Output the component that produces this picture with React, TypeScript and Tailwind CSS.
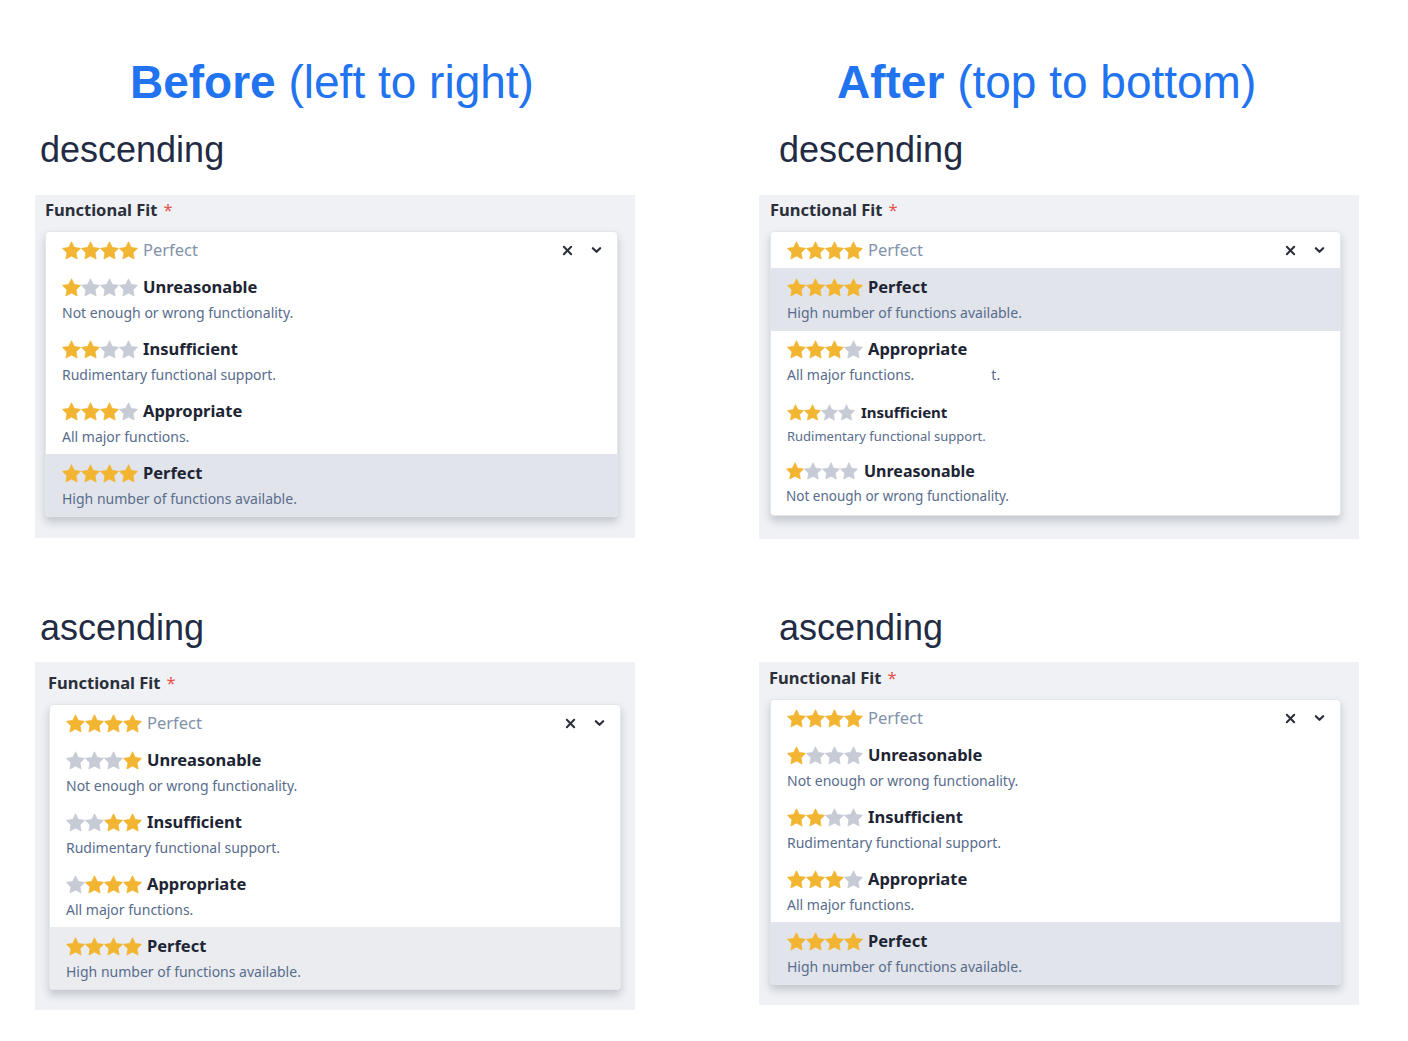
import React from 'react'

const GOLD = '#f2b532'
const GREY = '#c6cbd5'

type Opt = {
  stars: number
  title: string
  desc: string
  active?: boolean
  starSize?: number
  rowClass?: string
  titleClass?: string
  descClass?: string
  extra?: React.ReactNode
}

function Star({ on, size }: { on: boolean; size: number }) {
  return (
    <svg width={size} height={size} viewBox="0 0 24 24" className="shrink-0">
      <path
        d="M12 1L15.5 8.2L23.4 9.3L17.7 14.9L19.1 22.7L12 19L4.9 22.7L6.3 14.9L0.6 9.3L8.5 8.2Z"
        fill={on ? GOLD : GREY}
        stroke={on ? GOLD : GREY}
        strokeWidth="1"
        strokeLinejoin="round"
      />
    </svg>
  )
}

function Stars({ count, reverse, size = 19 }: { count: number; reverse?: boolean; size?: number }) {
  const list = [0, 1, 2, 3].map((i) => (reverse ? i >= 4 - count : i < count))
  return (
    <div className="flex items-center">
      {list.map((on, i) => (
        <Star key={i} on={on} size={size} />
      ))}
    </div>
  )
}

function Option({ opt, reverse, activeBg }: { opt: Opt; reverse?: boolean; activeBg: string }) {
  return (
    <div className={`${opt.rowClass ?? 'pl-[16px] pt-[8px] pb-[8px]'} ${opt.active ? activeBg : 'bg-white'}`}>
      <div className="flex items-center h-[22px]">
        <Stars count={opt.stars} reverse={reverse} size={opt.starSize} />
        <span className={`font-bold text-[#1d2433] ${opt.titleClass ?? 'ml-[5px] text-[16.5px]'}`}>{opt.title}</span>
      </div>
      <div className={`mt-[4px] h-[20px] flex items-center text-[#586c8c] ${opt.descClass ?? 'text-[14px]'}`}>
        {opt.desc}
        {opt.extra}
      </div>
    </div>
  )
}

function Dropdown({ opts, reverse, widthClass, activeBg, divider }: {
  opts: Opt[]
  reverse?: boolean
  widthClass: string
  activeBg: string
  divider?: boolean
}) {
  return (
    <div className={`${widthClass} bg-white rounded-[4px] border border-[#e3e6eb] shadow-[0_5px_9px_rgba(40,50,70,0.22)] overflow-hidden`}>
      <div className={`flex items-center pl-[16px] ${divider ? 'h-[37px] border-b border-[#e3e6eb]' : 'h-[36px]'}`}>
        <Stars count={4} />
        <span className="ml-[5px] text-[16.5px] text-[#8292aa]">Perfect</span>
        <div className="ml-auto mr-[15px] flex items-center gap-[18px]">
          <svg width="11" height="11" viewBox="0 0 12 12">
            <path d="M2 2L10 10M10 2L2 10" stroke="#2a2f3a" strokeWidth="2.2" strokeLinecap="round" />
          </svg>
          <svg width="11" height="8" viewBox="0 0 12 8">
            <path d="M2 2L6 6L10 2" stroke="#2a2f3a" strokeWidth="2.4" fill="none" strokeLinecap="round" strokeLinejoin="round" />
          </svg>
        </div>
      </div>
      {opts.map((o) => (
        <Option key={o.title} opt={o} reverse={reverse} activeBg={activeBg} />
      ))}
    </div>
  )
}

function Panel({ panelClass, labelClass, children }: { panelClass: string; labelClass: string; children: React.ReactNode }) {
  return (
    <div className={`w-[600px] bg-[#eff1f5] ${panelClass}`}>
      <div className={`h-[20px] flex items-center text-[16.5px] font-bold text-[#2a2f3a] ${labelClass}`}>
        Functional Fit<span className="ml-[6px] text-[#e5534b] font-normal">*</span>
      </div>
      {children}
    </div>
  )
}

const unreasonable = { stars: 1, title: 'Unreasonable', desc: 'Not enough or wrong functionality.' }
const insufficient = { stars: 2, title: 'Insufficient', desc: 'Rudimentary functional support.' }
const appropriate = { stars: 3, title: 'Appropriate', desc: 'All major functions.' }
const perfect = { stars: 4, title: 'Perfect', desc: 'High number of functions available.', active: true }

const ascending: Opt[] = [unreasonable, insufficient, appropriate, perfect]

const afterDesc: Opt[] = [
  { ...perfect, rowClass: 'pl-[16px] pt-[7px] pb-[9px]' },
  {
    ...appropriate,
    rowClass: 'pl-[16px] pt-[7px] pb-[9px]',
    extra: <span className="ml-[77px]">t.</span>,
  },
  {
    ...insufficient,
    starSize: 17,
    titleClass: 'ml-[6px] text-[15px]',
    descClass: 'text-[13px]',
    rowClass: 'pl-[16px] pt-[8px] pb-[6px]',
  },
  {
    ...unreasonable,
    starSize: 18,
    titleClass: 'ml-[6px] text-[16px]',
    descClass: 'text-[13.5px]',
    rowClass: 'pl-[15px] pt-[7px] pb-[9px]',
  },
]

function Heading({ bold, rest, className }: { bold: string; rest: string; className: string }) {
  return (
    <h1 className={`h-[56px] leading-[56px] text-[46px] text-[#2173f0] whitespace-nowrap ${className}`}>
      <span className="font-bold">{bold}</span> {rest}
    </h1>
  )
}

function Sub({ children, className }: { children: React.ReactNode; className: string }) {
  return <h2 className={`h-[44px] leading-[44px] text-[36px] text-[#222b43] ${className}`}>{children}</h2>
}

export default function App() {
  return (
    <div
      className="min-h-[1041px] w-[1408px] bg-white flex gap-[124px] pl-[35px] pt-[54px]"
      style={{ fontFamily: '"Noto Sans", "Open Sans", sans-serif' }}
    >
      <div className="flex flex-col w-[600px]">
        <Heading bold="Before" rest="(left to right)" className="ml-[95px] [font-family:'Liberation_Sans',Arial,sans-serif]" />
        <Sub className="mt-[18px] ml-[5px] [font-family:'Liberation_Sans',Arial,sans-serif]">descending</Sub>
        <div className="mt-[23px]">
          <Panel panelClass="h-[343px] pt-[5px] pl-[10px]" labelClass="">
            <div className="mt-[11px]">
              <Dropdown opts={ascending} widthClass="w-[573px]" activeBg="bg-[#e1e4ea]" />
            </div>
          </Panel>
        </div>
        <Sub className="mt-[68px] ml-[5px] [font-family:'Liberation_Sans',Arial,sans-serif]">ascending</Sub>
        <div className="mt-[12px]">
          <Panel panelClass="h-[348px] pt-[11px] pl-[13px]" labelClass="">
            <div className="mt-[11px] ml-[1px]">
              <Dropdown opts={ascending} reverse widthClass="w-[572px]" activeBg="bg-[#eaecf0]" />
            </div>
          </Panel>
        </div>
      </div>

      <div className="flex flex-col w-[600px]">
        <Heading bold="After" rest="(top to bottom)" className="ml-[78px] [font-family:'Liberation_Sans',Arial,sans-serif]" />
        <Sub className="mt-[18px] ml-[20px] [font-family:'Liberation_Sans',Arial,sans-serif]">descending</Sub>
        <div className="mt-[23px]">
          <Panel panelClass="h-[344px] pt-[5px] pl-[11px]" labelClass="">
            <div className="mt-[11px]">
              <Dropdown opts={afterDesc} widthClass="w-[571px]" activeBg="bg-[#e1e4ea]" divider />
            </div>
          </Panel>
        </div>
        <Sub className="mt-[67px] ml-[20px] [font-family:'Liberation_Sans',Arial,sans-serif]">ascending</Sub>
        <div className="mt-[12px]">
          <Panel panelClass="h-[343px] pt-[6px] pl-[11px]" labelClass="-ml-[1px]">
            <div className="mt-[11px]">
              <Dropdown opts={ascending} widthClass="w-[571px]" activeBg="bg-[#e1e4ea]" />
            </div>
          </Panel>
        </div>
      </div>
    </div>
  )
}
